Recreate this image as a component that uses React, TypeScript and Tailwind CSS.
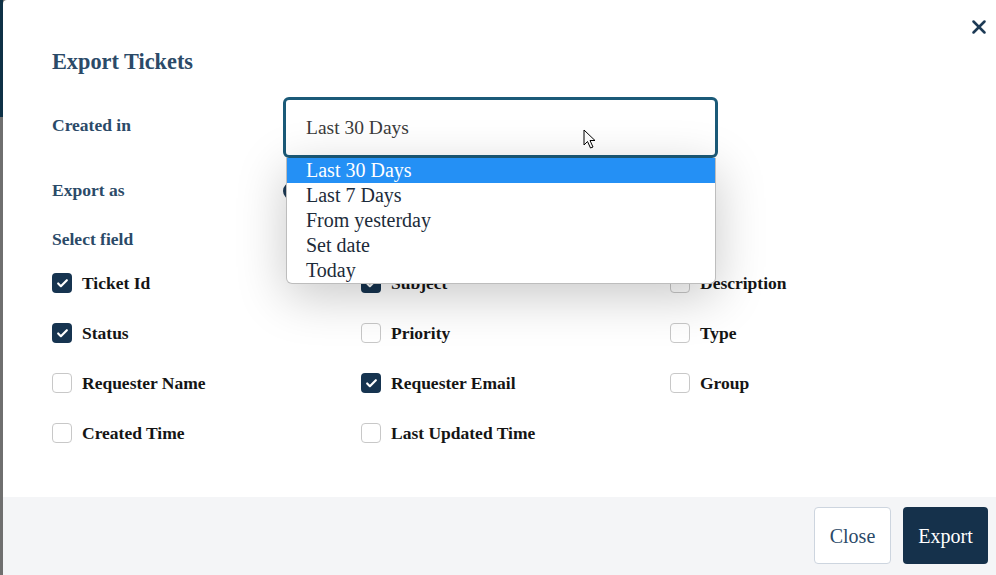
import { Check, X } from "lucide-react";

const fields = [
  { name: "Ticket Id", checked: true },
  { name: "Subject", checked: true },
  { name: "Description", checked: false },
  { name: "Status", checked: true },
  { name: "Priority", checked: false },
  { name: "Type", checked: false },
  { name: "Requester Name", checked: false },
  { name: "Requester Email", checked: true },
  { name: "Group", checked: false },
  { name: "Created Time", checked: false },
  { name: "Last Updated Time", checked: false },
];

const options = ["Last 30 Days", "Last 7 Days", "From yesterday", "Set date", "Today"];

const FieldCheckbox = ({ name, checked }: { name: string; checked: boolean }) => (
  <label className="flex h-[50px] items-center gap-[10px]">
    <span
      className={
        checked
          ? "flex h-[20px] w-[20px] items-center justify-center rounded-[4px] bg-[#163450]"
          : "h-[20px] w-[20px] rounded-[4px] border border-[#c8c8c8] bg-white"
      }
    >
      {checked && <Check className="h-[13px] w-[13px] text-white" strokeWidth={4} />}
    </span>
    <span className="text-[17.5px] font-bold text-[#151515]">{name}</span>
  </label>
);

export default function App() {
  return (
    <div className="flex h-[575px] w-[996px] overflow-hidden bg-[#6f6f6f] font-['Liberation_Serif',serif]">
      <div className="flex w-[3px] flex-col">
        <div className="h-[117px] bg-[#0e3146]" />
        <div className="flex-1 bg-[#6f6f6f]" />
      </div>

      <div className="flex flex-1 flex-col overflow-hidden rounded-tl-[4px] bg-white">
        <div className="relative flex-1 pl-[49px] pt-[49px]">
          <button className="absolute right-[6px] top-[16px] text-[#1d3a55]">
            <X className="h-[22px] w-[22px]" strokeWidth={2.8} />
          </button>

          <h2 className="text-[22.3px] leading-[26px] font-bold text-[#2b4a68]">Export Tickets</h2>

          <div className="mt-[22px] flex items-center">
            <div className="w-[231px] pb-[4px] text-[17.5px] font-bold text-[#2b4a68]">Created in</div>
            <div className="relative">
              <div className="flex h-[61px] w-[435px] items-center rounded-[6px] border-[3px] border-[#1b5a78] pl-[20px] text-[19.5px] text-[#3b3b3b]">
                Last 30 Days
              </div>
              <svg className="absolute left-[300px] top-[32px]" width="14" height="21" viewBox="0 0 14 21">
                <path d="M1 1 L1 16 L4.5 12.5 L7.5 19 L10 18 L7 11.5 L12 11.5 Z" fill="white" stroke="black" strokeWidth="1" strokeLinejoin="round" />
              </svg>
              <ul className="absolute left-[3px] top-[61px] z-10 w-[430px] overflow-hidden rounded-b-[6px] border border-t-0 border-[#bdbdbd] bg-white text-[20px] text-[#1c2b3a] shadow-[0_12px_50px_rgba(0,0,0,0.22)]">
                {options.map((option, i) => (
                  <li
                    key={option}
                    className={
                      i === 0
                        ? "h-[25px] bg-[#2490f5] pl-[19px] leading-[24px] text-white"
                        : "h-[25px] pl-[19px] leading-[24px]"
                    }
                  >
                    {option}
                  </li>
                ))}
              </ul>
            </div>
          </div>

          <div className="mt-[5px] flex h-[55px] items-center">
            <div className="w-[231px] text-[17.5px] font-bold text-[#2b4a68]">Export as</div>
            <span className="h-[18px] w-[18px] rounded-full border-[3px] border-[#1d3a55]" />
          </div>

          <div className="flex h-[42px] items-center text-[17.5px] font-bold text-[#2b4a68]">Select field</div>

          <div className="mt-[-2px] grid grid-cols-[309px_309px_1fr]">
            {fields.map((f) => (
              <FieldCheckbox key={f.name} name={f.name} checked={f.checked} />
            ))}
          </div>
        </div>

        <div className="flex h-[78px] items-start justify-end gap-[12px] bg-[#f4f5f7] pr-[8px] pt-[10px]">
          <button className="h-[57px] w-[77px] rounded-[4px] border border-[#cdd5df] bg-white text-[20px] text-[#2b4a68]">
            Close
          </button>
          <button className="h-[57px] w-[85px] rounded-[4px] bg-[#15314b] text-[20px] text-white">
            Export
          </button>
        </div>
      </div>
    </div>
  );
}
